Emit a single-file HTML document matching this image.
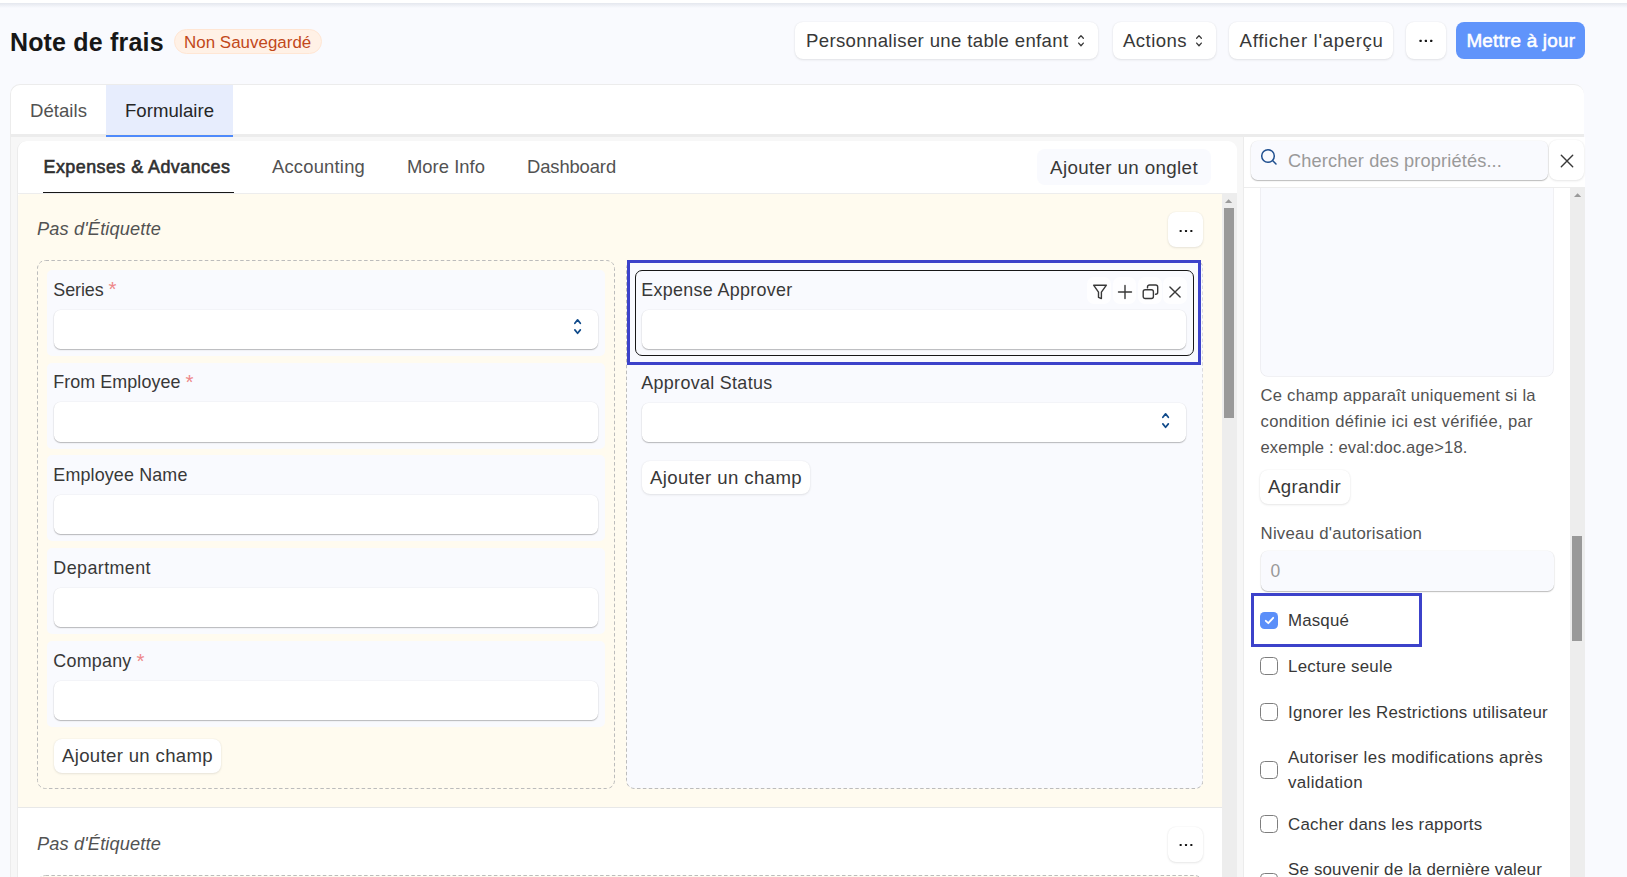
<!DOCTYPE html>
<html lang="fr"><head><meta charset="utf-8"><title>Note de frais</title>
<style>
html,body{margin:0;padding:0}
body{width:1627px;height:877px;overflow:hidden;position:relative;background:#f9fafe;font-family:"Liberation Sans", sans-serif;}
.t{position:absolute;white-space:nowrap;line-height:normal}
</style></head><body>
<div style="position:absolute;left:0;top:0;width:1627px;height:3px;background:#fff"></div>
<div style="position:absolute;left:0;top:3px;width:1627px;height:5px;background:linear-gradient(#e4e7ee,#f9fafe)"></div>
<span class="t" style="left:9.9px;top:27.67px;font-size:25px;letter-spacing:0.189px;color:#171717;font-weight:bold;">Note de frais</span>
<div style="position:absolute;left:174px;top:29.2px;width:148.2px;height:24.6px;box-sizing:border-box;border-radius:13px;background:#fff1e6;border:1px solid #ffe6d4"></div>
<span class="t" style="left:184px;top:32.71px;font-size:16.9px;letter-spacing:0.037px;color:#c2481a;">Non Sauvegardé</span>
<div style="position:absolute;left:795px;top:22px;width:303px;height:37px;border-radius:8px;background:#fff;box-shadow:0 1px 2.5px rgba(0,0,0,.09),0 0 1.5px rgba(0,0,0,.08);"></div>
<span class="t" style="left:806px;top:30.17px;font-size:18.6px;letter-spacing:0.342px;color:#383838;">Personnaliser une table enfant</span>
<svg style="position:absolute;left:1076.60px;top:34.00px" width="8" height="13.4" viewBox="-1 -1 8 13.4" fill="none" stroke="#383838" stroke-width="1.3" stroke-linecap="round" stroke-linejoin="round"><path d="M0.65 3.30 L3.0 0.65 L5.35 3.30 M0.65 8.10 L3.0 10.75 L5.35 8.10"/></svg>
<div style="position:absolute;left:1113px;top:22px;width:103px;height:37px;border-radius:8px;background:#fff;box-shadow:0 1px 2.5px rgba(0,0,0,.09),0 0 1.5px rgba(0,0,0,.08);"></div>
<span class="t" style="left:1123px;top:30.17px;font-size:18.6px;letter-spacing:0.431px;color:#383838;">Actions</span>
<svg style="position:absolute;left:1194.60px;top:34.00px" width="8" height="13.4" viewBox="-1 -1 8 13.4" fill="none" stroke="#383838" stroke-width="1.3" stroke-linecap="round" stroke-linejoin="round"><path d="M0.65 3.30 L3.0 0.65 L5.35 3.30 M0.65 8.10 L3.0 10.75 L5.35 8.10"/></svg>
<div style="position:absolute;left:1229px;top:22px;width:164px;height:37px;border-radius:8px;background:#fff;box-shadow:0 1px 2.5px rgba(0,0,0,.09),0 0 1.5px rgba(0,0,0,.08);"></div>
<span class="t" style="left:1239.6px;top:30.17px;font-size:18.6px;letter-spacing:0.682px;color:#383838;">Afficher l'aperçu</span>
<div style="position:absolute;left:1406px;top:22px;width:40px;height:37px;border-radius:8px;background:#fff;box-shadow:0 1px 2.5px rgba(0,0,0,.09),0 0 1.5px rgba(0,0,0,.08);"></div>
<svg style="position:absolute;left:1418px;top:38px" width="16" height="6" viewBox="0 0 16 6" fill="#171717"><rect x="1.5" y="1.8" width="2.2" height="2.2" rx=".5"/><rect x="6.8" y="1.8" width="2.2" height="2.2" rx=".5"/><rect x="12.1" y="1.8" width="2.2" height="2.2" rx=".5"/></svg>
<div style="position:absolute;left:1455.8px;top:22px;width:129.10000000000014px;height:37px;border-radius:8px;background:#6094fb;"></div>
<span class="t" style="left:1466.4px;top:29.60px;font-size:18.9px;letter-spacing:0.212px;color:#fff;-webkit-text-stroke:0.55px #fff;">Mettre à jour</span>
<div style="position:absolute;left:10.2px;top:84px;width:1574.3px;height:800px;box-sizing:border-box;background:#fff;border-radius:10px 10px 0 0;border-left:1px solid #ececec;border-top:1px solid #ececec"></div>
<div style="position:absolute;left:106px;top:85px;width:127px;height:52px;background:#e7edfd"></div>
<div style="position:absolute;left:11px;top:134.5px;width:1573px;height:760px;background:#f7f7f7"></div>
<div style="position:absolute;left:11px;top:134.4px;width:1573px;height:3px;background:#ececec"></div>
<div style="position:absolute;left:106px;top:134.5px;width:127px;height:2.6px;background:#4f8afb"></div>
<span class="t" style="left:30px;top:100.17px;font-size:18.6px;letter-spacing:0.022px;color:#525252;">Détails</span>
<span class="t" style="left:125px;top:100.17px;font-size:18.6px;letter-spacing:0.014px;color:#262626;">Formulaire</span>
<div style="position:absolute;left:17.2px;top:140.5px;width:1219.4px;height:760px;box-sizing:border-box;background:#fff;border-radius:9px 9px 0 0;border-left:1px solid #ececec"></div>
<span class="t" style="left:43.5px;top:156.80px;font-size:17.9px;letter-spacing:0.462px;color:#303030;-webkit-text-stroke:0.6px #303030;">Expenses &amp; Advances</span>
<div style="position:absolute;left:43px;top:191.5px;width:191px;height:1.5px;background:#171717"></div>
<span class="t" style="left:272px;top:156.35px;font-size:18.4px;letter-spacing:0.200px;color:#525252;">Accounting</span>
<span class="t" style="left:407px;top:156.35px;font-size:18.4px;letter-spacing:0.035px;color:#525252;">More Info</span>
<span class="t" style="left:527px;top:156.35px;font-size:18.4px;letter-spacing:-0.108px;color:#525252;">Dashboard</span>
<div style="position:absolute;left:1037px;top:149px;width:174px;height:36px;border-radius:8px;background:#f9fafe;"></div>
<span class="t" style="left:1050px;top:156.99px;font-size:18.8px;letter-spacing:0.352px;color:#383838;">Ajouter un onglet</span>
<div style="position:absolute;left:17.5px;top:193px;width:1219px;height:1px;background:#ededed"></div>
<div style="position:absolute;left:18px;top:194px;width:1204.2px;height:613px;background:#fffbef;border-radius:3px 0 0 0"></div>
<div style="position:absolute;left:17.5px;top:807px;width:1204.7px;height:1px;background:#e8e8e8"></div>
<span class="t" style="left:37px;top:218.53px;font-size:18.2px;letter-spacing:0.148px;color:#525252;font-style:italic;">Pas d'Étiquette</span>
<div style="position:absolute;left:1168px;top:212px;width:35px;height:35px;border-radius:8px;background:#fff;box-shadow:0 1px 2.5px rgba(0,0,0,.09),0 0 1.5px rgba(0,0,0,.08);"></div>
<svg style="position:absolute;left:1178.3px;top:227.6px" width="16" height="6" viewBox="0 0 16 6" fill="#171717"><rect x="1.6" y="1.9" width="2.1" height="2.1" rx=".5"/><rect x="6.95" y="1.9" width="2.1" height="2.1" rx=".5"/><rect x="12.3" y="1.9" width="2.1" height="2.1" rx=".5"/></svg>
<div style="position:absolute;left:1222.2px;top:194px;width:14.6px;height:700px;background:#ededed"></div>
<div style="position:absolute;left:1224px;top:208px;width:10px;height:210px;background:#999999"></div>
<svg style="position:absolute;left:1225.4px;top:199.3px" width="7.2" height="4" viewBox="0 0 6.6 3.6"><path d="M0 3.6 L3.3 0.2 L6.6 3.6z" fill="#9a9a9a"/></svg>
<svg style="position:absolute;left:37px;top:260px" width="578" height="529" viewBox="0 0 578 529"><rect x=".5" y=".5" width="577" height="528" rx="8" fill="transparent" stroke="#bcbcbc" stroke-width="1" stroke-dasharray="3.5 2.4"/></svg>
<svg style="position:absolute;left:625.5px;top:260px" width="577.5" height="529" viewBox="0 0 577.5 529"><rect x=".5" y=".5" width="576.5" height="528" rx="8" fill="#f9fafe" stroke="#bcbcbc" stroke-width="1" stroke-dasharray="3.5 2.4"/></svg>
<div style="position:absolute;left:47px;top:269.7px;width:558px;height:86px;border-radius:5px;background:#f9fafe"></div>
<span class="t" style="left:53.3px;top:279.60px;font-size:17.9px;letter-spacing:-0.086px;color:#383838;">Series</span>
<span class="t" style="left:108.6px;top:277.15px;font-size:20.5px;letter-spacing:0.016px;color:#ee8789;">*</span>
<div style="position:absolute;left:53.5px;top:309.59999999999997px;width:544.9px;height:39.10000000000002px;border-radius:6.5px;background:#fff;box-shadow:0 1px 1.2px rgba(0,0,0,.26),0 0 0 .6px rgba(0,0,0,.045)"></div>
<svg style="position:absolute;left:572.80px;top:318.40px" width="9.2" height="17.2" viewBox="-1 -1 9.2 17.2" fill="none" stroke="#0f4a8a" stroke-width="1.7" stroke-linecap="round" stroke-linejoin="round"><path d="M0.85 4.30 L3.6 0.85 L6.3500000000000005 4.30 M0.85 10.90 L3.6 14.35 L6.3500000000000005 10.90"/></svg>
<div style="position:absolute;left:47px;top:362.5px;width:558px;height:86px;border-radius:5px;background:#f9fafe"></div>
<span class="t" style="left:53.3px;top:372.45px;font-size:17.9px;letter-spacing:0.072px;color:#383838;">From Employee</span>
<span class="t" style="left:185.6px;top:370.00px;font-size:20.5px;letter-spacing:0.016px;color:#ee8789;">*</span>
<div style="position:absolute;left:53.5px;top:402.44999999999993px;width:544.9px;height:39.10000000000002px;border-radius:6.5px;background:#fff;box-shadow:0 1px 1.2px rgba(0,0,0,.26),0 0 0 .6px rgba(0,0,0,.045)"></div>
<div style="position:absolute;left:47px;top:455.4px;width:558px;height:86px;border-radius:5px;background:#f9fafe"></div>
<span class="t" style="left:53.3px;top:465.30px;font-size:17.9px;letter-spacing:0.150px;color:#383838;">Employee Name</span>
<div style="position:absolute;left:53.5px;top:495.29999999999995px;width:544.9px;height:39.10000000000002px;border-radius:6.5px;background:#fff;box-shadow:0 1px 1.2px rgba(0,0,0,.26),0 0 0 .6px rgba(0,0,0,.045)"></div>
<div style="position:absolute;left:47px;top:548.2px;width:558px;height:86px;border-radius:5px;background:#f9fafe"></div>
<span class="t" style="left:53.3px;top:558.15px;font-size:17.9px;letter-spacing:0.422px;color:#383838;">Department</span>
<div style="position:absolute;left:53.5px;top:588.15px;width:544.9px;height:39.10000000000002px;border-radius:6.5px;background:#fff;box-shadow:0 1px 1.2px rgba(0,0,0,.26),0 0 0 .6px rgba(0,0,0,.045)"></div>
<div style="position:absolute;left:47px;top:641.1px;width:558px;height:86px;border-radius:5px;background:#f9fafe"></div>
<span class="t" style="left:53.3px;top:651.00px;font-size:17.9px;letter-spacing:0.232px;color:#383838;">Company</span>
<span class="t" style="left:136.6px;top:648.55px;font-size:20.5px;letter-spacing:0.016px;color:#ee8789;">*</span>
<div style="position:absolute;left:53.5px;top:680.9999999999999px;width:544.9px;height:39.10000000000002px;border-radius:6.5px;background:#fff;box-shadow:0 1px 1.2px rgba(0,0,0,.26),0 0 0 .6px rgba(0,0,0,.045)"></div>
<div style="position:absolute;left:53.5px;top:739px;width:167.5px;height:34px;border-radius:8px;background:#fff;box-shadow:0 1px 2.5px rgba(0,0,0,.09),0 0 1.5px rgba(0,0,0,.08);"></div>
<span class="t" style="left:62px;top:745.07px;font-size:18.6px;letter-spacing:0.328px;color:#383838;">Ajouter un champ</span>
<div style="position:absolute;left:634.5px;top:269.5px;width:559.5px;height:86.5px;box-sizing:border-box;border:1.5px solid #171717;border-radius:7px;background:#f9fafe"></div>
<span class="t" style="left:641.3px;top:279.80px;font-size:17.9px;letter-spacing:0.312px;color:#383838;">Expense Approver</span>
<div style="position:absolute;left:641.5px;top:309.5px;width:544.7px;height:39.39999999999998px;border-radius:6.5px;background:#fff;box-shadow:0 1px 1.2px rgba(0,0,0,.26),0 0 0 .6px rgba(0,0,0,.045)"></div>
<div style="position:absolute;left:1087.2px;top:277px;width:23.9px;height:26.8px;border-radius:7px;background:#fefeff"></div>
<div style="position:absolute;left:1112.5px;top:277px;width:23.9px;height:26.8px;border-radius:7px;background:#fefeff"></div>
<div style="position:absolute;left:1137.8px;top:277px;width:23.9px;height:26.8px;border-radius:7px;background:#fefeff"></div>
<div style="position:absolute;left:1162.9px;top:277px;width:23.9px;height:26.8px;border-radius:7px;background:#fefeff"></div>
<svg style="position:absolute;left:1091.6px;top:284px" width="16" height="16" viewBox="0 0 16 16" fill="none" stroke="#383838" stroke-width="1.4" stroke-linecap="round" stroke-linejoin="round"><path d="M1.6 1.2 H14.4 L9.4 8.2 V14.6 L6.5 13.3 V8.2 Z"/></svg>
<svg style="position:absolute;left:1116.8px;top:284px" width="16" height="16" viewBox="0 0 16 16" fill="none" stroke="#383838" stroke-width="1.4" stroke-linecap="round" stroke-linejoin="round"><path d="M8 1.5 V14.5 M1.5 8 H14.5"/></svg>
<svg style="position:absolute;left:1141.6px;top:284px" width="18" height="16" viewBox="0 0 18 16" fill="none" stroke="#383838" stroke-width="1.4" stroke-linecap="round" stroke-linejoin="round"><rect x="1.2" y="5.8" width="10.2" height="8.7" rx="2"/><path d="M5.5 3.9 V3 a2 2 0 0 1 2 -2 H13.7 a2 2 0 0 1 2 2 V8.2 a2 2 0 0 1 -2 2 H13.5"/></svg>
<svg style="position:absolute;left:1167px;top:284px" width="16" height="16" viewBox="0 0 16 16" fill="none" stroke="#383838" stroke-width="1.4" stroke-linecap="round" stroke-linejoin="round"><path d="M2.9 2.9 L13.1 13.1 M13.1 2.9 L2.9 13.1"/></svg>
<div style="position:absolute;left:626.8px;top:260.2px;width:574.3px;height:104.4px;box-sizing:border-box;border:3px solid #3c42ca"></div>
<span class="t" style="left:641.3px;top:372.80px;font-size:17.9px;letter-spacing:0.326px;color:#383838;">Approval Status</span>
<div style="position:absolute;left:641.5px;top:402.6px;width:544.7px;height:39.19999999999999px;border-radius:6.5px;background:#fff;box-shadow:0 1px 1.2px rgba(0,0,0,.26),0 0 0 .6px rgba(0,0,0,.045)"></div>
<svg style="position:absolute;left:1160.70px;top:411.70px" width="9.2" height="17.2" viewBox="-1 -1 9.2 17.2" fill="none" stroke="#0f4a8a" stroke-width="1.7" stroke-linecap="round" stroke-linejoin="round"><path d="M0.85 4.30 L3.6 0.85 L6.3500000000000005 4.30 M0.85 10.90 L3.6 14.35 L6.3500000000000005 10.90"/></svg>
<div style="position:absolute;left:641.7px;top:460.5px;width:168.29999999999995px;height:33.5px;border-radius:8px;background:#fff;box-shadow:0 1px 2.5px rgba(0,0,0,.09),0 0 1.5px rgba(0,0,0,.08);"></div>
<span class="t" style="left:650px;top:467.17px;font-size:18.6px;letter-spacing:0.391px;color:#383838;">Ajouter un champ</span>
<span class="t" style="left:37px;top:834.03px;font-size:18.2px;letter-spacing:0.148px;color:#525252;font-style:italic;">Pas d'Étiquette</span>
<div style="position:absolute;left:1168px;top:826.5px;width:35px;height:35.0px;border-radius:8px;background:#fff;box-shadow:0 1px 2.5px rgba(0,0,0,.09),0 0 1.5px rgba(0,0,0,.08);"></div>
<svg style="position:absolute;left:1178.3px;top:841.9px" width="16" height="6" viewBox="0 0 16 6" fill="#171717"><rect x="1.6" y="1.9" width="2.1" height="2.1" rx=".5"/><rect x="6.95" y="1.9" width="2.1" height="2.1" rx=".5"/><rect x="12.3" y="1.9" width="2.1" height="2.1" rx=".5"/></svg>
<svg style="position:absolute;left:37px;top:874.5px" width="1166" height="30.0" viewBox="0 0 1166 30.0"><rect x=".5" y=".5" width="1165" height="29.0" rx="8" fill="#fffbef" stroke="#bcbcbc" stroke-width="1" stroke-dasharray="3.5 2.4"/></svg>
<div style="position:absolute;left:1243.2px;top:137.4px;width:341.4px;height:760px;box-sizing:border-box;background:#fff;border-left:1px solid #ececec"></div>
<div style="position:absolute;left:1244px;top:187px;width:340.5px;height:1px;background:#ededed"></div>
<div style="position:absolute;left:1250.7px;top:140.7px;width:297.70000000000005px;height:39.30000000000001px;border-radius:6.5px;background:#f9fafe;box-shadow:0 1px 1.2px rgba(0,0,0,.26),0 0 0 .6px rgba(0,0,0,.045)"></div>
<svg style="position:absolute;left:1260.3px;top:147.6px" width="18" height="18" viewBox="0 0 18 18" fill="none" stroke="#1f4f8f" stroke-width="1.5" stroke-linecap="round"><circle cx="8" cy="8" r="6.3"/><path d="M12.8 12.8 L16 16"/></svg>
<span class="t" style="left:1288px;top:151.13px;font-size:18.2px;letter-spacing:0.143px;color:#999999;">Chercher des propriétés...</span>
<div style="position:absolute;left:1548.9px;top:139.9px;width:35.09999999999991px;height:40.099999999999994px;border-radius:8px;background:#fff;box-shadow:0 1px 2.5px rgba(0,0,0,.09),0 0 1.5px rgba(0,0,0,.08);"></div>
<svg style="position:absolute;left:1560px;top:153.5px" width="14" height="14" viewBox="0 0 14 14" fill="none" stroke="#383838" stroke-width="1.4" stroke-linecap="round"><path d="M1.3 1.3 L12.7 12.7 M12.7 1.3 L1.3 12.7"/></svg>
<div style="position:absolute;left:1260.2px;top:150px;width:293.6px;height:226.8px;box-sizing:border-box;border:1px solid #ececf0;border-radius:8px;background:#f9fafe;clip-path:inset(38px 0 0 0)"></div>
<span class="t" style="left:1260.5px;top:386.48px;font-size:16.6px;letter-spacing:0.257px;color:#525252;">Ce champ apparaît uniquement si la</span>
<span class="t" style="left:1260.5px;top:412.48px;font-size:16.6px;letter-spacing:0.365px;color:#525252;">condition définie ici est vérifiée, par</span>
<span class="t" style="left:1260.5px;top:438.48px;font-size:16.6px;letter-spacing:0.138px;color:#525252;">exemple : eval:doc.age&gt;18.</span>
<div style="position:absolute;left:1260px;top:470.2px;width:90px;height:33.5px;border-radius:8px;background:#fff;box-shadow:0 1px 2.5px rgba(0,0,0,.09),0 0 1.5px rgba(0,0,0,.08);"></div>
<span class="t" style="left:1268px;top:475.97px;font-size:18.6px;letter-spacing:0.340px;color:#383838;">Agrandir</span>
<span class="t" style="left:1260.5px;top:524.10px;font-size:16.8px;letter-spacing:0.262px;color:#525252;">Niveau d'autorisation</span>
<div style="position:absolute;left:1260.5px;top:551.4px;width:293.0999999999999px;height:39.60000000000002px;border-radius:6.5px;background:#f9fafe;box-shadow:0 1px 1.2px rgba(0,0,0,.26),0 0 0 .6px rgba(0,0,0,.045)"></div>
<span class="t" style="left:1270.5px;top:561.16px;font-size:17.5px;letter-spacing:-0.234px;color:#999999;">0</span>
<div style="position:absolute;left:1251.3px;top:593.1px;width:170.5px;height:53.8px;box-sizing:border-box;border:3px solid #3c42ca"></div>
<div style="position:absolute;left:1260.3px;top:611.8px;width:17.5px;height:17px;border-radius:4.5px;background:#5b8ff9"></div><svg style="position:absolute;left:1263.5px;top:614.8px" width="11" height="11" viewBox="0 0 11 11" fill="none" stroke="#fff" stroke-width="1.8" stroke-linecap="round" stroke-linejoin="round"><path d="M1.8 5.8 L4.3 8.2 L9.2 2.8"/></svg>
<span class="t" style="left:1288px;top:610.71px;font-size:16.9px;letter-spacing:0.151px;color:#383838;">Masqué</span>
<div style="position:absolute;left:1260.2px;top:657.05px;width:17.7px;height:17.8px;box-sizing:border-box;border:1.3px solid #7e7e7e;border-radius:4.5px;background:#fff"></div>
<span class="t" style="left:1288px;top:656.71px;font-size:16.9px;letter-spacing:0.244px;color:#383838;">Lecture seule</span>
<div style="position:absolute;left:1260.2px;top:703.3499999999999px;width:17.7px;height:17.8px;box-sizing:border-box;border:1.3px solid #7e7e7e;border-radius:4.5px;background:#fff"></div>
<span class="t" style="left:1288px;top:702.71px;font-size:16.9px;letter-spacing:0.286px;color:#383838;">Ignorer les Restrictions utilisateur</span>
<div style="position:absolute;left:1260.2px;top:761.05px;width:17.7px;height:17.8px;box-sizing:border-box;border:1.3px solid #7e7e7e;border-radius:4.5px;background:#fff"></div>
<span class="t" style="left:1288px;top:747.71px;font-size:16.9px;letter-spacing:0.330px;color:#383838;">Autoriser les modifications après</span>
<span class="t" style="left:1288px;top:772.71px;font-size:16.9px;letter-spacing:0.362px;color:#383838;">validation</span>
<div style="position:absolute;left:1260.2px;top:815.05px;width:17.7px;height:17.8px;box-sizing:border-box;border:1.3px solid #7e7e7e;border-radius:4.5px;background:#fff"></div>
<span class="t" style="left:1288px;top:814.71px;font-size:16.9px;letter-spacing:0.241px;color:#383838;">Cacher dans les rapports</span>
<div style="position:absolute;left:1260.2px;top:873.25px;width:17.7px;height:17.8px;box-sizing:border-box;border:1.3px solid #7e7e7e;border-radius:4.5px;background:#fff"></div>
<span class="t" style="left:1288px;top:859.71px;font-size:16.9px;letter-spacing:0.185px;color:#383838;">Se souvenir de la dernière valeur</span>
<div style="position:absolute;left:1569.8px;top:188px;width:14.9px;height:700px;background:#ededed"></div>
<div style="position:absolute;left:1572.2px;top:536.3px;width:10px;height:104.5px;background:#999999"></div>
<svg style="position:absolute;left:1573.5px;top:193.2px" width="7.2" height="4" viewBox="0 0 6.6 3.6"><path d="M0 3.6 L3.3 0.2 L6.6 3.6z" fill="#9a9a9a"/></svg>
</body></html>
